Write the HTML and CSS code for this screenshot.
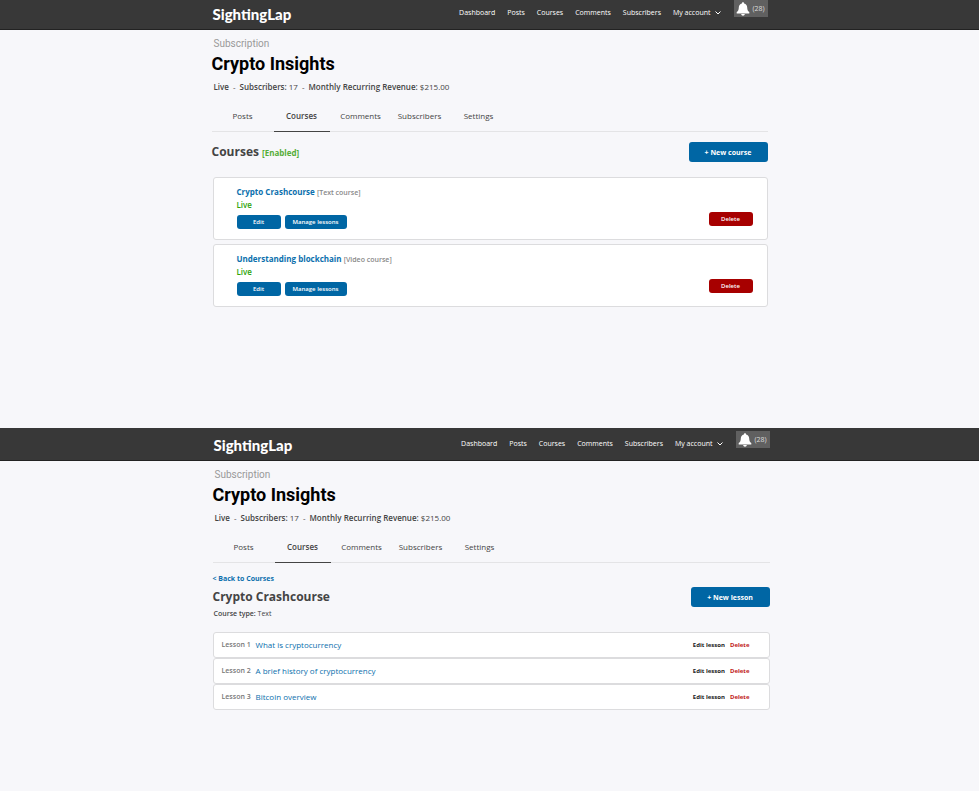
FILE: index.html
```html
<!DOCTYPE html>
<html lang="en">
<head>
    <meta charset="UTF-8">
    <meta name="viewport" content="width=device-width, initial-scale=1.0">
    <title>SightingLap - Crypto Insights</title>
    <link rel="stylesheet" href="styles.css">
</head>
<body>

    <!-- Course list -->
    <section class="screen screen-courses">
        <header class="topbar">
            <div class="container topbar-inner">
                <a class="logo" href="#">SightingLap</a>
                <nav class="main-nav">
                    <a href="#">Dashboard</a>
                    <a href="#">Posts</a>
                    <a href="#">Courses</a>
                    <a href="#">Comments</a>
                    <a href="#">Subscribers</a>
                    <button class="account" type="button">My account
                        <svg class="chevron" viewBox="0 0 8 8"><path d="M1.5 2.5 4 5l2.5-2.5"/></svg>
                    </button>
                    <button class="bell" type="button" aria-label="Notifications">
                        <svg class="bell-icon" viewBox="0 0 14 14"><path d="M7 .3c.7 0 1.100.5 1.100 1.100 2 .5 3 2 3.100 4 .1 2.400.5 3.500 2.100 4.600v1.400H.7V10c1.600-1.100 2-2.200 2.100-4.600.1-2 1.100-3.500 3.100-4C5.900.8 6.300.3 7 .3zM5.200 12h3.600c-.1 1-.8 1.700-1.800 1.700S5.300 13 5.200 12z"/></svg>
                        <span>(28)</span>
                    </button>
                </nav>
            </div>
        </header>

        <main class="container">
            <p class="eyebrow">Subscription</p>
            <h1>Crypto Insights</h1>
            <p class="stats">
                <strong>Live</strong><span class="dash">-</span><strong>Subscribers:</strong> 17<span class="dash">-</span><strong>Monthly Recurring Revenue:</strong> $215.00
            </p>

            <nav class="tabs">
                <a href="#">Posts</a>
                <a class="active" href="#">Courses</a>
                <a href="#">Comments</a>
                <a href="#">Subscribers</a>
                <a href="#">Settings</a>
            </nav>

            <div class="title-row">
                <h2>Courses <span class="enabled">[Enabled]</span></h2>
                <button class="btn btn-new" type="button">+ New course</button>
            </div>

            <div class="course-list">
                <article class="course-card">
                    <div class="course-info">
                        <h3><a href="#">Crypto Crashcourse</a> <small>[Text course]</small></h3>
                        <p class="status">Live</p>
                        <div class="actions">
                            <button class="btn btn-small" type="button">Edit</button>
                            <button class="btn btn-small btn-wide" type="button">Manage lessons</button>
                        </div>
                    </div>
                    <button class="btn btn-small btn-delete" type="button">Delete</button>
                </article>
                <article class="course-card">
                    <div class="course-info">
                        <h3><a href="#">Understanding blockchain</a> <small>[Video course]</small></h3>
                        <p class="status">Live</p>
                        <div class="actions">
                            <button class="btn btn-small" type="button">Edit</button>
                            <button class="btn btn-small btn-wide" type="button">Manage lessons</button>
                        </div>
                    </div>
                    <button class="btn btn-small btn-delete" type="button">Delete</button>
                </article>
            </div>
        </main>
    </section>

    <!-- Lessons of one course -->
    <section class="screen screen-lessons">
        <header class="topbar">
            <div class="container topbar-inner">
                <a class="logo" href="#">SightingLap</a>
                <nav class="main-nav">
                    <a href="#">Dashboard</a>
                    <a href="#">Posts</a>
                    <a href="#">Courses</a>
                    <a href="#">Comments</a>
                    <a href="#">Subscribers</a>
                    <button class="account" type="button">My account
                        <svg class="chevron" viewBox="0 0 8 8"><path d="M1.5 2.5 4 5l2.5-2.5"/></svg>
                    </button>
                    <button class="bell" type="button" aria-label="Notifications">
                        <svg class="bell-icon" viewBox="0 0 14 14"><path d="M7 .3c.7 0 1.100.5 1.100 1.100 2 .5 3 2 3.100 4 .1 2.400.5 3.500 2.100 4.600v1.400H.7V10c1.600-1.100 2-2.200 2.100-4.600.1-2 1.100-3.500 3.100-4C5.900.8 6.300.3 7 .3zM5.200 12h3.600c-.1 1-.8 1.700-1.800 1.700S5.300 13 5.200 12z"/></svg>
                        <span>(28)</span>
                    </button>
                </nav>
            </div>
        </header>

        <main class="container">
            <p class="eyebrow">Subscription</p>
            <h1>Crypto Insights</h1>
            <p class="stats">
                <strong>Live</strong><span class="dash">-</span><strong>Subscribers:</strong> 17<span class="dash">-</span><strong>Monthly Recurring Revenue:</strong> $215.00
            </p>

            <nav class="tabs">
                <a href="#">Posts</a>
                <a class="active" href="#">Courses</a>
                <a href="#">Comments</a>
                <a href="#">Subscribers</a>
                <a href="#">Settings</a>
            </nav>

            <a class="back" href="#">&lt; Back to Courses</a>
            <div class="title-row">
                <h2>Crypto Crashcourse</h2>
                <button class="btn btn-new" type="button">+ New lesson</button>
            </div>
            <p class="course-type"><strong>Course type:</strong> Text</p>

            <ul class="lesson-list">
                <li>
                    <span class="number">Lesson 1</span>
                    <a class="lesson" href="#">What is cryptocurrency</a>
                    <a class="edit" href="#">Edit lesson</a>
                    <a class="delete" href="#">Delete</a>
                </li>
                <li>
                    <span class="number">Lesson 2</span>
                    <a class="lesson" href="#">A brief history of cryptocurrency</a>
                    <a class="edit" href="#">Edit lesson</a>
                    <a class="delete" href="#">Delete</a>
                </li>
                <li>
                    <span class="number">Lesson 3</span>
                    <a class="lesson" href="#">Bitcoin overview</a>
                    <a class="edit" href="#">Edit lesson</a>
                    <a class="delete" href="#">Delete</a>
                </li>
            </ul>
        </main>
    </section>

</body>
</html>
```
FILE: styles.css
```css
/* General Styling */
* {
    box-sizing: border-box;
}

body {
    margin: 0;
    background: #f7f7fa;
    color: #444;
    font-family: 'Open Sans', sans-serif;
    font-size: 8px;
    line-height: 12px;
}

h1, h2, h3, p, ul {
    margin: 0;
    padding: 0;
}

a {
    color: inherit;
    text-decoration: none;
}

button {
    margin: 0;
    padding: 0;
    border: 0;
    font-family: inherit;
    cursor: pointer;
}

.container {
    width: 100%;
    max-width: 556px;
    margin: 0 auto;
}

.screen-courses {
    padding-bottom: 121px;
}

.screen-lessons .container {
    max-width: 560px;
    padding-left: 3px;
}

/* Header Styling */
.topbar {
    background: #383838;
    border-bottom: 1px solid #222;
}

.topbar-inner {
    display: flex;
    justify-content: space-between;
    align-items: flex-start;
    height: 29px;
}

.screen-lessons .topbar-inner {
    height: 32px;
    padding-top: 3px;
}

.logo {
    padding: 6px 0 0 1px;
    color: #fff;
    font-family: Lato, sans-serif;
    font-size: 15px;
    font-weight: 900;
    line-height: 16px;
}

.main-nav {
    display: flex;
    align-items: flex-start;
    gap: 12px;
    color: #fff;
    font-size: 7px;
    font-weight: 500;
    line-height: 10px;
}

.main-nav > a, .account {
    padding-top: 8px;
}

.account {
    display: flex;
    align-items: center;
    gap: 3px;
    background: none;
    color: inherit;
    font-size: inherit;
    font-weight: inherit;
    line-height: inherit;
}

.chevron {
    width: 8px;
    height: 8px;
    fill: none;
    stroke: #fff;
    stroke-width: 1;
}

.bell {
    display: flex;
    align-items: center;
    justify-content: center;
    gap: 2px;
    width: 34px;
    height: 17px;
    background: #606060;
    color: #ddd;
    font-size: 7px;
}

.bell-icon {
    width: 14px;
    height: 14px;
    fill: #fff;
}

/* Page heading */
.eyebrow {
    padding: 7px 0 0 2px;
    color: #999;
    font-family: Roboto, sans-serif;
    font-size: 10px;
    line-height: 14px;
}

h1 {
    color: #000;
    font-family: Roboto, sans-serif;
    font-size: 18px;
    font-weight: 700;
    line-height: 26px;
}

.stats {
    padding: 4px 0 0 2px;
}

strong {
    font-weight: 600;
}

.dash {
    margin: 0 4px;
}

/* Tabs */
.tabs {
    display: flex;
    gap: 3px;
    margin-top: 8px;
    padding-left: 3px;
    border-bottom: 1px solid #e4e4e6;
}

.tabs a {
    width: 56px;
    height: 31px;
    margin-bottom: -1px;
    line-height: 29px;
    text-align: center;
}

.tabs .active {
    border-bottom: 1px solid #444;
    font-weight: 600;
}

/* Title row */
.title-row {
    display: flex;
    align-items: center;
    justify-content: space-between;
    height: 20px;
}

.screen-courses .title-row {
    margin: 10px 0 15px;
}

h2 {
    font-size: 12px;
    font-weight: 700;
    line-height: 18px;
}

.enabled {
    color: #55ad37;
    font-size: 8px;
}

.btn {
    border-radius: 3px;
    background: #0066a4;
    color: #fff;
    font-weight: 600;
}

.btn-new {
    width: 79px;
    height: 20px;
    font-size: 7px;
    font-weight: 700;
}

.btn-small {
    width: 44px;
    height: 14px;
    font-size: 6px;
}

.btn-wide {
    width: 62px;
}

.btn-delete {
    background: #a70000;
}

/* Course cards */
.course-list {
    display: flex;
    flex-direction: column;
    gap: 4px;
    padding-left: 1px;
}

.course-card {
    display: flex;
    justify-content: space-between;
    align-items: flex-end;
    padding: 8px 14px 10px 23px;
    border: 1px solid #dcdcde;
    border-radius: 3px;
    background: #fff;
}

.course-card h3 {
    font-size: 8px;
    font-weight: 700;
    line-height: 12px;
}

.course-card h3 a, .back, .lesson {
    color: #0b6fad;
}

.course-card small {
    color: #888;
    font-size: 7px;
    font-weight: 600;
}

.status {
    color: #2ea40a;
    font-weight: 600;
}

.actions {
    display: flex;
    gap: 4px;
    margin-top: 4px;
}

.course-card .btn-delete {
    margin-bottom: 3px;
}

/* Lessons */
.back {
    display: block;
    margin: 10px 0 2px;
    font-size: 7px;
    font-weight: 700;
}

.course-type {
    padding: 1px 0 0 1px;
    font-size: 7px;
}

.lesson-list {
    margin-top: 12px;
    list-style: none;
}

.lesson-list li {
    display: flex;
    align-items: center;
    height: 26px;
    padding: 0 19px 0 8px;
    border: 1px solid #dcdcde;
    border-radius: 3px;
    background: #fff;
    font-size: 6px;
    font-weight: 700;
}

.number {
    width: 34px;
    color: #777;
    font-size: 7px;
    font-weight: 600;
}

.lesson {
    flex: 1;
    font-size: 8px;
    font-weight: 400;
}

.edit {
    margin-right: 5px;
    color: #222;
}

.delete {
    color: #c01818;
}
```
